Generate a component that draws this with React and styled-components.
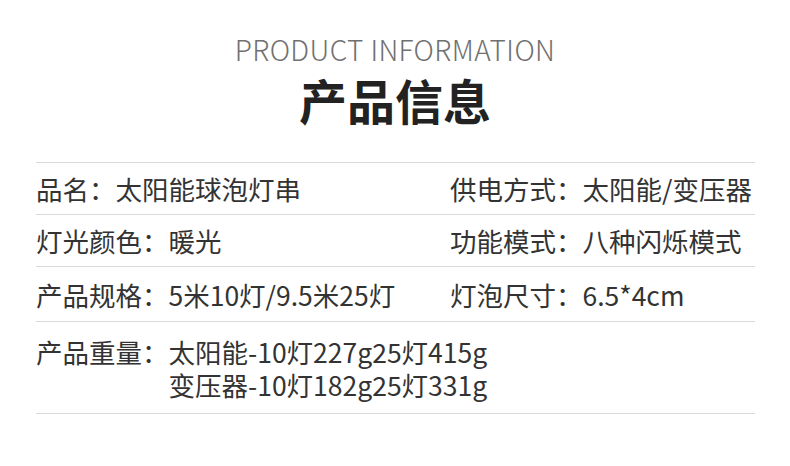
import styled, { createGlobalStyle } from "styled-components";

const GlobalStyle = createGlobalStyle`
  html, body {
    margin: 0;
    padding: 0;
    background: #ffffff;
  }
  body {
    font-family: "Noto Sans CJK SC", "Noto Sans", sans-serif;
  }
`;

const Page = styled.section`
  width: 790px;
  height: 466px;
  background: #ffffff;
  padding-top: 33px;
  box-sizing: border-box;
`;

const Header = styled.header`
  display: flex;
  flex-direction: column;
  align-items: center;
`;

const EnTitle = styled.h2`
  margin: 0;
  font-size: 28px;
  line-height: 33px;
  font-weight: 300;
  color: #707070;
  letter-spacing: 0.4px;
`;

const CnTitle = styled.h1`
  margin: 4px 0 0;
  font-size: 48px;
  line-height: 58px;
  font-weight: 700;
  color: #222222;
`;

const Table = styled.div`
  margin: 34px 35px 0 36px;
  border-bottom: 1px solid #d9d9d9;
`;

const Row = styled.div`
  display: grid;
  grid-template-columns: 414px 1fr;
  align-items: center;
  min-height: ${(p) => p.$height}px;
  border-top: 1px solid #d9d9d9;
  box-sizing: border-box;
`;

const Cell = styled.div`
  display: flex;
  font-size: 26.5px;
  line-height: 33px;
  color: #333333;
  white-space: nowrap;
`;

const Label = styled.span`
  flex: none;
`;

const Value = styled.span`
  display: flex;
  flex-direction: column;
`;

const rows = [
  { h: 52, left: ["品名：", ["太阳能球泡灯串"]], right: ["供电方式：", ["太阳能/变压器"]] },
  { h: 52, left: ["灯光颜色：", ["暖光"]], right: ["功能模式：", ["八种闪烁模式"]] },
  { h: 55, left: ["产品规格：", ["5米10灯/9.5米25灯"]], right: ["灯泡尺寸：", ["6.5*4cm"]] },
  {
    h: 92,
    left: ["产品重量：", ["太阳能-10灯227g25灯415g", "变压器-10灯182g25灯331g"]],
    right: null,
  },
];

const InfoCell = ({ item }) => {
  if (!item) return <Cell />;
  const [label, lines] = item;
  return (
    <Cell>
      <Label>{label}</Label>
      <Value>
        {lines.map((l) => (
          <span key={l}>{l}</span>
        ))}
      </Value>
    </Cell>
  );
};

export default function App() {
  return (
    <Page>
      <GlobalStyle />
      <Header>
        <EnTitle>PRODUCT INFORMATION</EnTitle>
        <CnTitle>产品信息</CnTitle>
      </Header>
      <Table>
        {rows.map((r, i) => (
          <Row key={i} $height={r.h}>
            <InfoCell item={r.left} />
            <InfoCell item={r.right} />
          </Row>
        ))}
      </Table>
    </Page>
  );
}
